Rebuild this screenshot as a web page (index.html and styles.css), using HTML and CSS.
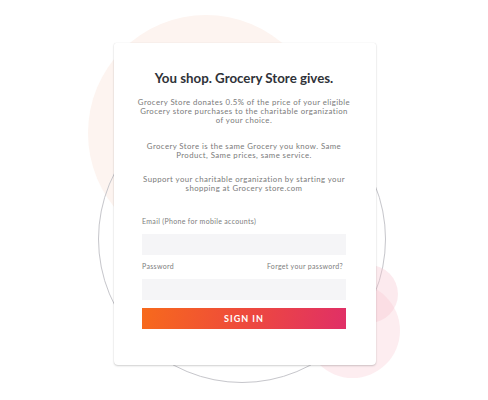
FILE: index.html
```html
<!DOCTYPE html>
<html>
<head>
<meta charset="utf-8">
<link rel="stylesheet" href="styles.css">
</head>
<body>
<div class="stage">
  <div class="blob blob-peach"></div>
  <div class="blob blob-ring"></div>
  <div class="blob blob-pink-a"></div>
  <div class="blob blob-pink-b"></div>
  <div class="card">
    <h1 class="title">You shop. Grocery Store gives.</h1>
    <p class="copy copy-first">Grocery Store donates 0.5% of the price of your eligible<br>Grocery store purchases to the charitable organization<br>of your choice.</p>
    <p class="copy copy-second">Grocery Store is the same Grocery you know. Same<br>Product, Same prices, same service.</p>
    <p class="copy copy-third">Support your charitable organization by starting your<br>shopping at Grocery store.com</p>
    <form class="form">
      <label class="label">Email (Phone for mobile accounts)</label>
      <div class="input"></div>
      <div class="label-row">
        <span class="label">Password</span>
        <span class="label">Forget your password?</span>
      </div>
      <div class="input"></div>
      <div class="button">SIGN IN</div>
    </form>
  </div>
</div>
</body>
</html>
```

FILE: styles.css
```css
* { box-sizing: border-box; }
html, body { margin: 0; padding: 0; background: #ffffff; }
body { font-family: "Lato", "Open Sans", sans-serif; }

.stage {
  position: relative;
  width: 488px;
  height: 400px;
  overflow: hidden;
  padding-top: 43px;
}

.blob {
  position: absolute;
  border-radius: 50%;
}
.blob-peach {
  left: 88px;
  top: 15px;
  width: 236px;
  height: 236px;
  background: #fdf4f0;
}
.blob-ring {
  left: 98px;
  top: 95px;
  width: 288px;
  height: 288px;
  border: 1.5px solid #c6c6cb;
}
.blob-pink-a {
  left: 340px;
  top: 265px;
  width: 58px;
  height: 58px;
  background: rgba(247, 196, 206, 0.35);
}
.blob-pink-b {
  left: 305px;
  top: 283px;
  width: 95px;
  height: 95px;
  background: rgba(247, 196, 206, 0.3);
}

.card {
  position: relative;
  margin-left: 114px;
  width: 262px;
  height: 322px;
  background: #ffffff;
  border-radius: 2px 2px 4px 4px;
  box-shadow: 0 1px 2px rgba(0,0,0,0.18), 0 0 1px rgba(0,0,0,0.12);
  padding: 27px 30px 0 28px;
  text-align: center;
}

.title {
  margin: 0;
  font-size: 13.3px;
  line-height: 16px;
  font-weight: 700;
  color: #2f3238;
}

.copy {
  margin: 0 -12px;
  font-size: 7.8px;
  line-height: 9px;
  letter-spacing: 0.42px;
  color: #7a7a7a;
}
.copy-first { margin-top: 12px; }
.copy-second { margin-top: 17px; }
.copy-third { margin-top: 15px; }

.form {
  margin: 24px 0 0 0;
  text-align: left;
  display: flex;
  flex-direction: column;
}
.label {
  font-size: 7px;
  line-height: 9px;
  letter-spacing: 0.32px;
  color: #7d7d7d;
}
.label-row {
  display: flex;
  justify-content: space-between;
  padding-right: 3px;
  margin-top: 7px;
}
.input {
  height: 21px;
  background: #f5f5f7;
  margin-top: 8px;
}
.button {
  margin-top: 8px;
  height: 21px;
  background: linear-gradient(100deg, #f76a1c 0%, #ee4a3c 50%, #e02f67 100%);
  color: #ffffff;
  font-size: 9px;
  font-weight: 700;
  letter-spacing: 1px;
  line-height: 21px;
  text-align: center;
}
```
